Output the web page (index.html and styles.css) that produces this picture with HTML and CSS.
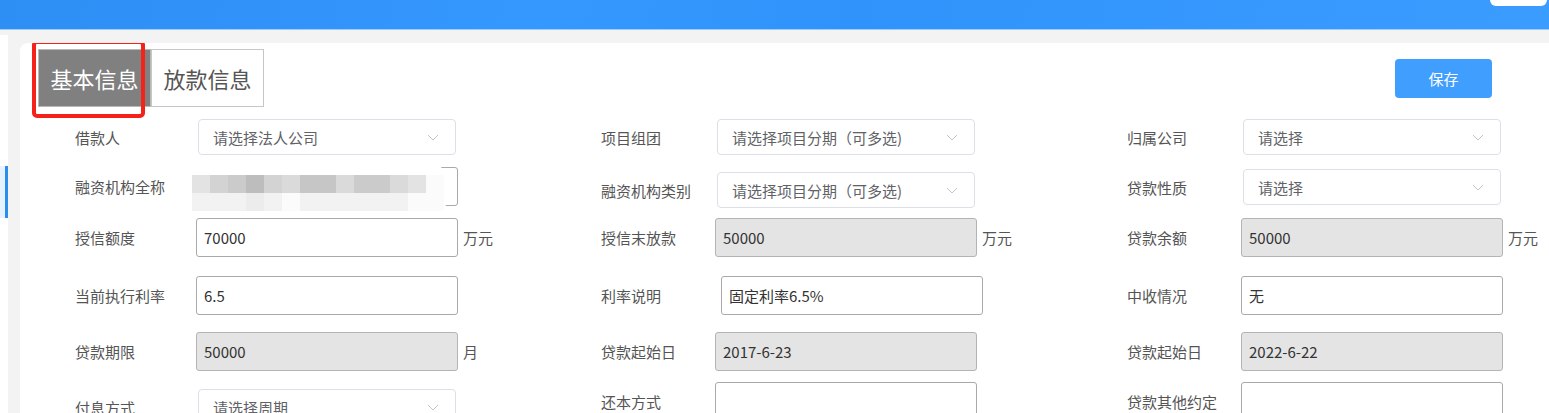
FILE: index.html
```html
<!DOCTYPE html>
<html lang="zh-CN">
<head>
    <meta charset="UTF-8">
    <meta name="viewport" content="width=device-width, initial-scale=1.0">
    <title>贷款信息</title>
    <link rel="stylesheet" href="styles.css">
</head>
<body>

    <header class="topbar">
        <div class="top-user"></div>
    </header>

    <div class="main">
        <aside class="sidenav">
            <div class="nav-item active"></div>
        </aside>

        <section class="card">
            <div class="card-head">
                <div class="tabs">
                    <span class="tab active">基本信息</span>
                    <span class="tab">放款信息</span>
                    <span class="mark"></span>
                </div>
                <button class="btn-save">保存</button>
            </div>

            <form class="form">
                <!-- 第一行 -->
                <div class="row r1">
                    <div class="field c1">
                        <label class="lbl">借款人</label>
                        <div class="select"><span>请选择法人公司</span><svg class="arrow" width="12" height="7" viewBox="0 0 12 7"><polyline points="1,1 6,6 11,1"/></svg></div>
                    </div>
                    <div class="field">
                        <label class="lbl">项目组团</label>
                        <div class="select"><span>请选择项目分期（可多选)</span><svg class="arrow" width="12" height="7" viewBox="0 0 12 7"><polyline points="1,1 6,6 11,1"/></svg></div>
                    </div>
                    <div class="field">
                        <label class="lbl">归属公司</label>
                        <div class="select"><span>请选择</span><svg class="arrow" width="12" height="7" viewBox="0 0 12 7"><polyline points="1,1 6,6 11,1"/></svg></div>
                    </div>
                </div>

                <!-- 第二行 -->
                <div class="row r2">
                    <div class="field c1">
                        <label class="lbl">融资机构全称</label>
                        <div class="blur-wrap">
                            <input class="ipt" type="text" value="">
                            <div class="blur">
                                <div class="mosaic">
                                    <i class="g3"></i><i class="g5"></i><i class="g6"></i><i class="g8"></i><i class="g5"></i><i class="g4"></i><i class="g7"></i>
                                    <i class="g7"></i><i class="g4"></i><i class="g6"></i><i class="g6"></i><i class="g4"></i><i class="g3"></i><i class="g1"></i>
                                    <i class="g2"></i><i class="g2"></i><i class="g2"></i><i class="g3b"></i><i class="g2"></i><i class="g1"></i><i class="g2"></i>
                                    <i class="g2"></i><i class="g2"></i><i class="g2"></i><i class="g2"></i><i class="g2"></i><i class="g1"></i><i class="g1"></i>
                                </div>
                            </div>
                        </div>
                    </div>
                    <div class="field down5">
                        <label class="lbl">融资机构类别</label>
                        <div class="select"><span>请选择项目分期（可多选)</span><svg class="arrow" width="12" height="7" viewBox="0 0 12 7"><polyline points="1,1 6,6 11,1"/></svg></div>
                    </div>
                    <div class="field down2">
                        <label class="lbl">贷款性质</label>
                        <div class="select"><span>请选择</span><svg class="arrow" width="12" height="7" viewBox="0 0 12 7"><polyline points="1,1 6,6 11,1"/></svg></div>
                    </div>
                </div>

                <!-- 第三行 -->
                <div class="row r3">
                    <div class="field c1">
                        <label class="lbl">授信额度</label>
                        <input class="ipt" type="text" value="70000">
                        <span class="unit">万元</span>
                    </div>
                    <div class="field">
                        <label class="lbl">授信末放款</label>
                        <input class="ipt off" type="text" value="50000" readonly>
                        <span class="unit">万元</span>
                    </div>
                    <div class="field">
                        <label class="lbl">贷款余额</label>
                        <input class="ipt off" type="text" value="50000" readonly>
                        <span class="unit">万元</span>
                    </div>
                </div>

                <!-- 第四行 -->
                <div class="row r4">
                    <div class="field c1">
                        <label class="lbl">当前执行利率</label>
                        <input class="ipt" type="text" value="6.5">
                    </div>
                    <div class="field">
                        <label class="lbl">利率说明</label>
                        <input class="ipt shift" type="text" value="固定利率6.5%">
                    </div>
                    <div class="field">
                        <label class="lbl">中收情况</label>
                        <input class="ipt" type="text" value="无">
                    </div>
                </div>

                <!-- 第五行 -->
                <div class="row r5">
                    <div class="field c1">
                        <label class="lbl">贷款期限</label>
                        <input class="ipt off" type="text" value="50000" readonly>
                        <span class="unit">月</span>
                    </div>
                    <div class="field">
                        <label class="lbl">贷款起始日</label>
                        <input class="ipt off" type="text" value="2017-6-23" readonly>
                    </div>
                    <div class="field">
                        <label class="lbl">贷款起始日</label>
                        <input class="ipt off" type="text" value="2022-6-22" readonly>
                    </div>
                </div>

                <!-- 第六行 -->
                <div class="row r6">
                    <div class="field c1 down7">
                        <label class="lbl">付息方式</label>
                        <div class="select"><span>请选择周期</span><svg class="arrow" width="12" height="7" viewBox="0 0 12 7"><polyline points="1,1 6,6 11,1"/></svg></div>
                    </div>
                    <div class="field">
                        <label class="lbl">还本方式</label>
                        <input class="ipt" type="text" value="">
                    </div>
                    <div class="field">
                        <label class="lbl">贷款其他约定</label>
                        <input class="ipt" type="text" value="">
                    </div>
                </div>
            </form>
        </section>
    </div>

</body>
</html>
```

FILE: styles.css
```css
/* Estilo geral */
body {
    margin: 0;
    height: 413px;
    overflow: hidden;
    font-family: "Noto Sans CJK SC", "Noto Sans", sans-serif;
    background-color: #f3f3f3;
    color: #555;
}

/* Barra do topo */
.topbar {
    height: 29px;
    border-bottom: 1px solid #9ccdff;
    background: linear-gradient(100deg, #2d8ef4 0%, #3598fe 35%, #2f93fb 55%, #3b9cff 100%);
    display: flex;
    justify-content: flex-end;
}

.top-user {
    width: 57px;
    height: 6px;
    margin-right: 2px;
    background: #fff;
    border-radius: 0 0 7px 7px;
}

.main {
    display: flex;
    align-items: flex-start;
    gap: 12px;
}

/* Menu lateral */
.sidenav {
    width: 8px;
    flex-shrink: 0;
    height: 400px;
    margin-top: 5px;
    background: #fff;
}

.nav-item {
    height: 52px;
    margin-top: 131px;
}

.nav-item.active {
    background: #e6f2ff;
    border-right: 3px solid #2d8cf0;
    box-sizing: border-box;
}

/* Caixa principal */
.card {
    flex: 1;
    min-width: 0;
    height: 380px;
    margin-top: 13px;
    background: #fff;
    border-radius: 8px 0 0 0;
    overflow: hidden;
}

.card-head {
    display: flex;
    justify-content: space-between;
    align-items: center;
    padding: 6px 57px 0 18px;
}

.tabs {
    position: relative;
    display: flex;
}

.tab {
    width: 113px;
    height: 58px;
    box-sizing: border-box;
    border: 1px solid #c6c6c6;
    display: flex;
    align-items: center;
    justify-content: center;
    font-size: 22px;
    color: #555;
    background: #fff;
}

.tab.active {
    background: #808080;
    border-color: #b8b8b8;
    color: #fff;
}

/* marcação vermelha */
.mark {
    position: absolute;
    left: -6px;
    top: -9px;
    width: 113px;
    height: 78px;
    box-sizing: border-box;
    border: 4px solid #f5211b;
    border-radius: 5px;
}

.btn-save {
    width: 97px;
    height: 39px;
    border: none;
    border-radius: 4px;
    background: #409eff;
    color: #fff;
    font-family: inherit;
    font-size: 15px;
    cursor: pointer;
}

/* Formulario */
.form {
    padding-left: 55px;
    margin-top: 12px;
}

.row {
    display: flex;
    align-items: flex-start;
}

.r2 { margin-top: 12px; }
.r3 { margin-top: 10px; }
.r4 { margin-top: 19px; }
.r5 { margin-top: 17px; }
.r6 { margin-top: 11px; }

.field {
    width: 526px;
    flex-shrink: 0;
    display: flex;
    align-items: center;
}

.field:last-child {
    width: auto;
}

.down2 { margin-top: 2px; }
.down5 { margin-top: 5px; }
.down7 { margin-top: 7px; }

.lbl {
    width: 114px;
    flex-shrink: 0;
    font-size: 15px;
    color: #555;
}

.c1 .lbl {
    width: 121px;
}

.select {
    width: 258px;
    height: 36px;
    margin-left: 2px;
    box-sizing: border-box;
    border: 1px solid #dcdfe6;
    border-radius: 4px;
    padding: 0 16px 0 14px;
    display: flex;
    align-items: center;
    justify-content: space-between;
    font-size: 15px;
    color: #606266;
    background: #fff;
}

.arrow polyline {
    fill: none;
    stroke: #c0c4cc;
    stroke-width: 1;
}

.ipt {
    width: 262px;
    height: 39px;
    box-sizing: border-box;
    margin: 0;
    border: 1px solid #a9a9a9;
    border-radius: 3px;
    padding: 0 7px;
    font-family: inherit;
    font-size: 15px;
    color: #333;
    background: #fff;
    outline: none;
}

.ipt.off {
    background: #e4e4e4;
    border-color: #b4b4b4;
}

.ipt.shift {
    margin-left: 6px;
}

.unit {
    margin-left: 5px;
    font-size: 15px;
    color: #555;
}

/* area borrada */
.blur-wrap {
    position: relative;
}

.blur {
    position: absolute;
    left: -27px;
    top: -7px;
    width: 282px;
    height: 58px;
    border-radius: 29px;
    background: #fff;
}

.mosaic {
    position: absolute;
    left: 23px;
    top: 15px;
    display: grid;
    grid-template-columns: repeat(14, 18px);
    grid-auto-rows: 18px;
}

.mosaic i { display: block; }
.g1 { background: #fbfbfb; }
.g2 { background: #f2f2f2; }
.g3 { background: #e3e3e3; }
.g3b { background: #ececec; }
.g4 { background: #dadada; }
.g5 { background: #d3d3d3; }
.g6 { background: #cbcbcb; }
.g7 { background: #c6c6c6; }
.g8 { background: #bdbdbd; }
```
